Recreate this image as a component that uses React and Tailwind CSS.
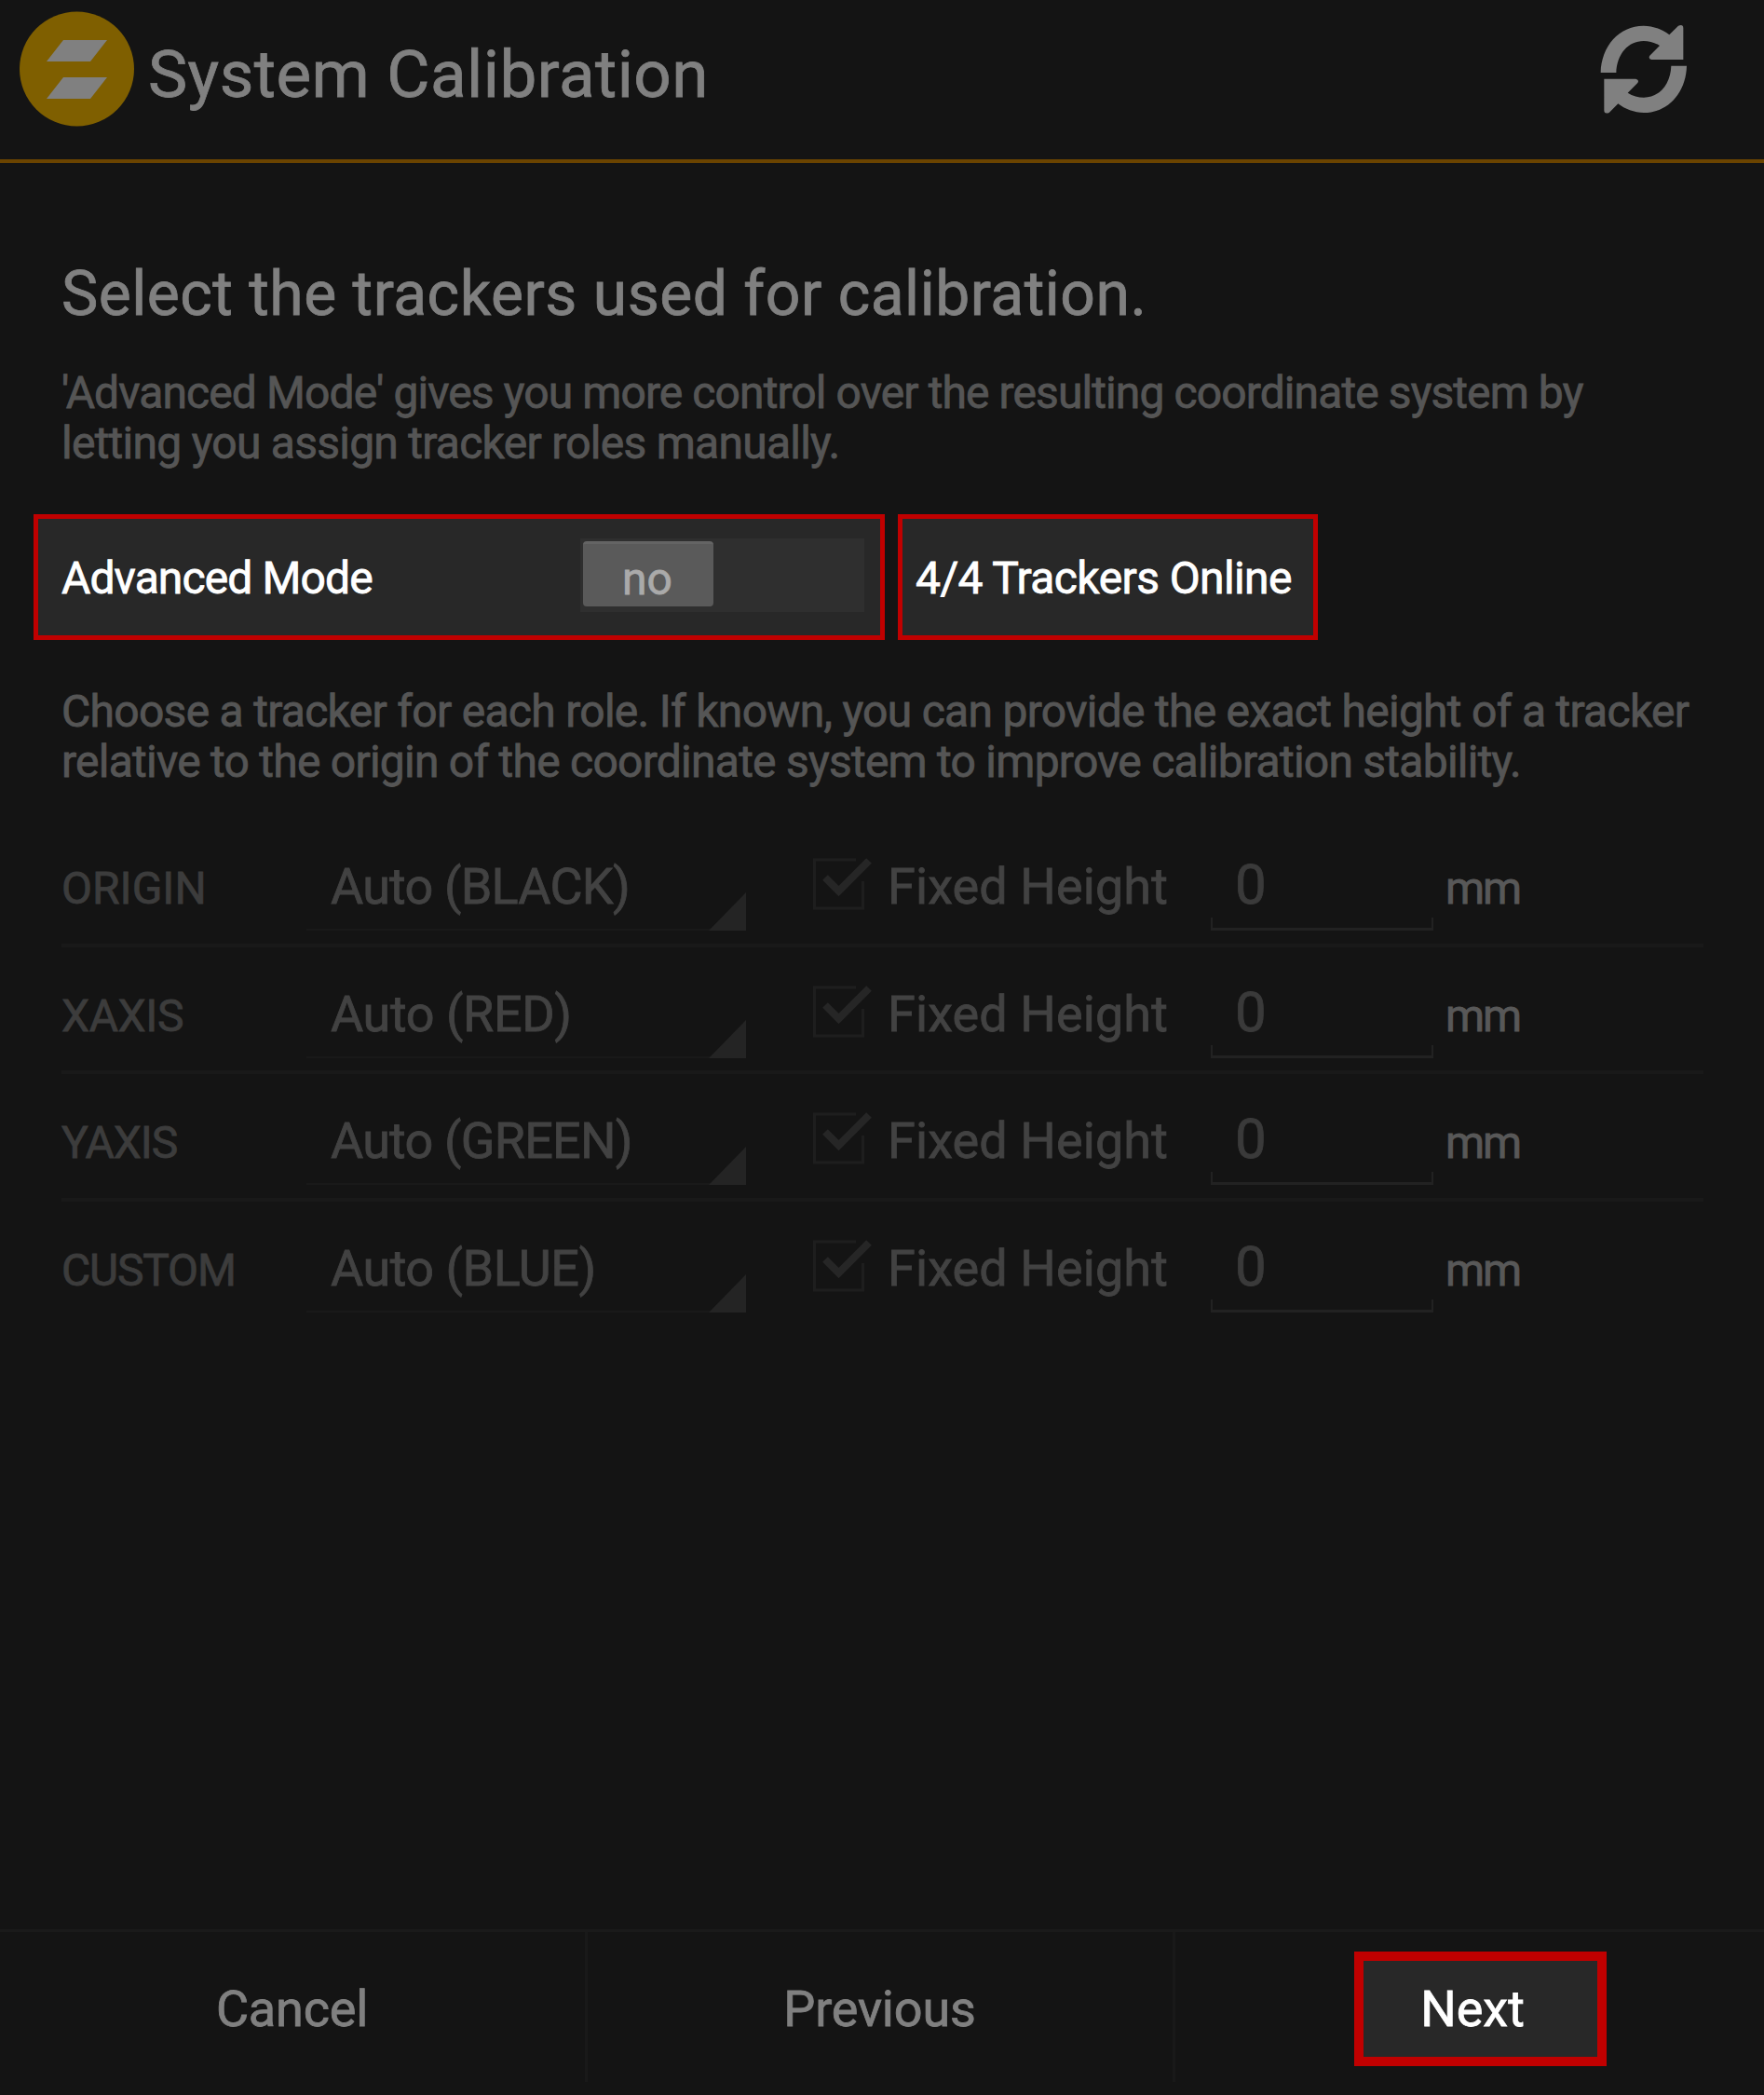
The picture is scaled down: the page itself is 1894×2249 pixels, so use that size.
const rows = [
  { role: "ORIGIN", roleSpacing: "tracking-[0px]", tracker: "Auto (BLACK)", trackerSpacing: "tracking-[-0.8px]" },
  { role: "XAXIS", roleSpacing: "tracking-[-0.4px]", tracker: "Auto (RED)", trackerSpacing: "tracking-[-0.4px]" },
  { role: "YAXIS", roleSpacing: "tracking-[-1.1px]", tracker: "Auto (GREEN)", trackerSpacing: "tracking-[-0.8px]" },
  { role: "CUSTOM", roleSpacing: "tracking-[-1.2px]", tracker: "Auto (BLUE)", trackerSpacing: "tracking-[-0.5px]" },
];

function Logo() {
  return (
    <svg viewBox="0 0 124 124" className="h-[124px] w-[124px] shrink-0">
      <circle cx="62.5" cy="62" r="61.5" fill="#7f5f00" />
      <path d="M48 31H95L77 54H30ZM48 71H95L77 94H30Z" fill="#808080" />
    </svg>
  );
}

function RefreshIcon() {
  const arrow =
    "M116 235C118 150 175 84 254 84C285 84 315 96 337 113L366 84Q382 78 382 92V193H280Q268 190 274 180L306 148C290 138 272 133 254 133C205 133 168 175 166 235Z";
  return (
    <svg viewBox="114 82 282 285" className="h-[95px] w-[94px]" fill="#808080">
      <path d={arrow} />
      <path d={arrow} transform="rotate(180 254.5 224)" />
    </svg>
  );
}

function Checkbox() {
  return (
    <svg viewBox="0 0 64 60" className="h-[60px] w-[64px] shrink-0" fill="none">
      <path d="M46 4H1.5V56H53.5V27" stroke="#1e1e1e" strokeWidth="3" />
      <path d="M13 23L27.5 37.5L60 5" stroke="#262626" strokeWidth="8" />
    </svg>
  );
}

function TrackerRow({ role, roleSpacing, tracker, trackerSpacing, last }) {
  return (
    <div
      className={
        "flex h-[136.6px] items-start border-b-4 leading-[64px] whitespace-nowrap " +
        (last ? "border-transparent" : "border-[#191919]")
      }
    >
      <div className={"mt-[42px] w-[263px] text-[48px] text-[#3c3c3c] " + roleSpacing}>{role}</div>
      <div className={"relative mt-[21px] h-[98px] w-[472px] border-b-2 border-[#191919] pt-[19px] pl-[26px] text-[54px] text-[#424242] " + trackerSpacing}>
        {tracker}
        <svg viewBox="0 0 40 41" className="absolute -bottom-0.5 right-0 h-[41px] w-[40px]">
          <path d="M40 0V41H0Z" fill="#242424" />
        </svg>
      </div>
      <div className="ml-[72px] flex w-[427px] pt-[39px] text-[54px] text-[#424242]">
        <Checkbox />
        <div className="mt-[1px] ml-[16px] tracking-[0.1px]">Fixed Height</div>
      </div>
      <div className="flex h-[119px] w-[239px] flex-col justify-end">
        <div className="pl-[26px] text-[60px] leading-[62px] text-[#3a3a3a]">0</div>
        <div className="mt-[4px] h-[14px] border-2 border-t-0 border-b-3 border-[#222]" />
      </div>
      <div className="mt-[42px] ml-[13px] text-[48px] tracking-[-2px] text-[#585858]">mm</div>
    </div>
  );
}

export default function App() {
  return (
    <div className="flex h-[2249px] w-[1894px] flex-col overflow-hidden bg-[#141414] font-['Roboto',sans-serif] whitespace-nowrap [-webkit-text-stroke:0.8px]">
      <header className="flex h-[175px] shrink-0 items-start border-b-4 border-[#6b4400] pt-[12px] pl-[20px]">
        <Logo />
        <h1 className="ml-[15px] text-[71px] leading-[136px] tracking-[0.45px] text-[#808080]">System Calibration</h1>
        <div className="mt-[15px] mr-[82px] ml-auto"><RefreshIcon /></div>
      </header>

      <main className="flex flex-col">
        <h2 className="mt-[101px] ml-[66px] text-[66px] leading-[80px] tracking-[0.5px] text-[#808080]">
          Select the trackers used for calibration.
        </h2>
        <p className="mt-[39px] ml-[66px] text-[48px] leading-[54px] text-[#555]">
          <span className="tracking-[-0.9px]">
            'Advanced Mode' gives you more control over the resulting coordinate system by
          </span>
          <br />
          <span className="tracking-[-0.74px]">letting you assign tracker roles manually.</span>
        </p>
        <div className="mt-[49px] ml-[36px] flex h-[135px] gap-[14px] text-[48px] text-white">
          <div className="flex w-[914px] items-center border-5 border-[#c00000] bg-[#282828] pl-[25px]">
            <span className="w-[557px] pt-[3px] tracking-[-0.88px]">Advanced Mode</span>
            <div className="mb-[5px] h-[79px] w-[305px] bg-[#2f2f2f] pt-[3px] pl-[3px]">
              <div className="h-[70px] w-[140px] rounded-sm border-t-3 border-[#646464] bg-[#5a5a5a] pr-[2px] text-center leading-[76px] text-[#aaa]">
                no
              </div>
            </div>
          </div>
          <div className="flex w-[451px] items-center border-5 border-[#c00000] bg-[#282828] pt-[3px] pl-[14px] tracking-[-0.6px]">
            4/4 Trackers Online
          </div>
        </div>
        <p className="mt-[50px] ml-[66px] text-[48px] leading-[54px] text-[#555]">
          <span className="tracking-[-0.71px]">
            Choose a tracker for each role. If known, you can provide the exact height of a tracker
          </span>
          <br />
          <span className="tracking-[-0.75px]">
            relative to the origin of the coordinate system to improve calibration stability.
          </span>
        </p>
        <section className="mt-[35px] ml-[66px] w-[1763px]">
          {rows.map((r, i) => (
            <TrackerRow key={r.role} {...r} last={i === rows.length - 1} />
          ))}
        </section>
      </main>

      <footer className="mt-auto flex h-[178px] shrink-0 border-t-3 border-[#1a1a1a] text-[54px] leading-[166px]">
        <button className="mb-[14px] w-[631px] border-r-3 border-[#191919] pr-[1px] pb-[7px] tracking-[-0.2px] text-[#808080]">Cancel</button>
        <button className="mb-[14px] w-[631px] border-r-3 border-[#191919] pr-[1px] pb-[7px] tracking-[-0.2px] text-[#808080]">Previous</button>
        <button className="mt-[21px] ml-[192px] h-[123px] w-[271px] border-10 border-[#c00000] bg-[#282828] pr-[17px] text-center leading-[99px] text-white">
          Next
        </button>
      </footer>
    </div>
  );
}
